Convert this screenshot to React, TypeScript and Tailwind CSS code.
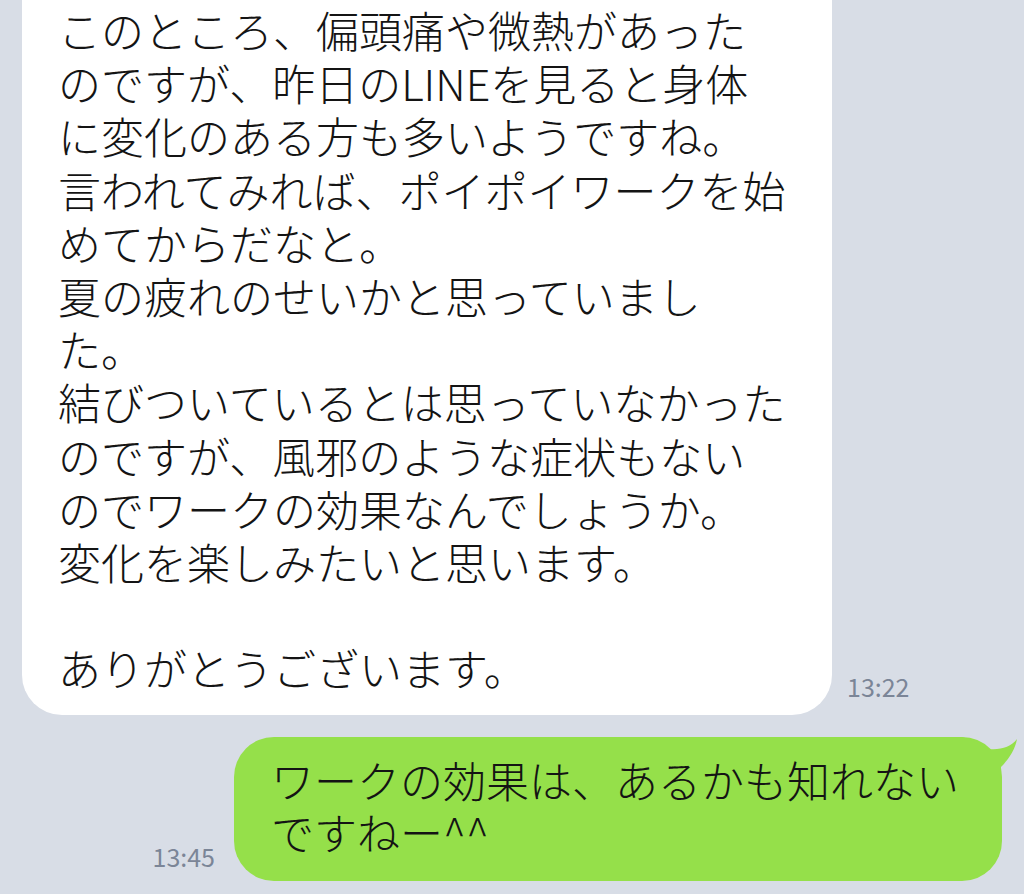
const incoming = [
  "このところ、偏頭痛や微熱があった",
  "のですが、昨日のLINEを見ると身体",
  "に変化のある方も多いようですね。",
  "言われてみれば、ポイポイワークを始",
  "めてからだなと。",
  "夏の疲れのせいかと思っていまし",
  "た。",
  "結びついているとは思っていなかった",
  "のですが、風邪のような症状もない",
  "のでワークの効果なんでしょうか。",
  "変化を楽しみたいと思います。",
  "",
  "ありがとうございます。",
];

const outgoing = ["ワークの効果は、あるかも知れない", "ですねー^^"];

function BubbleTail() {
  return (
    <svg
      viewBox="0 0 60 44"
      className="absolute right-[-17px] top-0 h-[44px] w-[60px]"
      aria-hidden
    >
      <path
        d="M0 0 C12 0 20 10 30 12 C42 13 52 10 58 2 C56 14 48 24 42 30 L42 44 L0 44 Z"
        fill="#95e04a"
      />
    </svg>
  );
}

export default function App() {
  return (
    <div
      className="flex h-[894px] w-[1024px] flex-col overflow-hidden bg-[#d8dde6] text-[#141414]"
      style={{ fontFamily: '"Noto Sans CJK JP", "Noto Sans", sans-serif' }}
    >
      <div className="flex items-end">
        <div className="ml-[22px] mt-[-40px] w-[810px] rounded-[40px] bg-white pb-[21px] pl-[36px] pr-4 pt-[43px] text-[43px] font-light leading-[53.2px]">
          {incoming.map((line, i) => (
            <div key={i} className="h-[53.2px] whitespace-nowrap">
              {line}
            </div>
          ))}
        </div>
        <span className="mb-[15px] ml-[15px] text-[25px] leading-[28px] text-[#7b8597]">
          13:22
        </span>
      </div>

      <div className="mt-[22px] flex items-end justify-end pr-[22px]">
        <span className="mb-[11px] mr-[19px] text-[25px] leading-[28px] text-[#7b8597]">
          13:45
        </span>
        <div className="relative w-[768px] rounded-[40px] bg-[#95e04a] pb-[24px] pl-[37px] pt-[16px] text-[43px] font-light leading-[52px]">
          <BubbleTail />
          {outgoing.map((line, i) => (
            <div key={i} className="relative whitespace-nowrap">
              {line}
            </div>
          ))}
        </div>
      </div>
    </div>
  );
}
